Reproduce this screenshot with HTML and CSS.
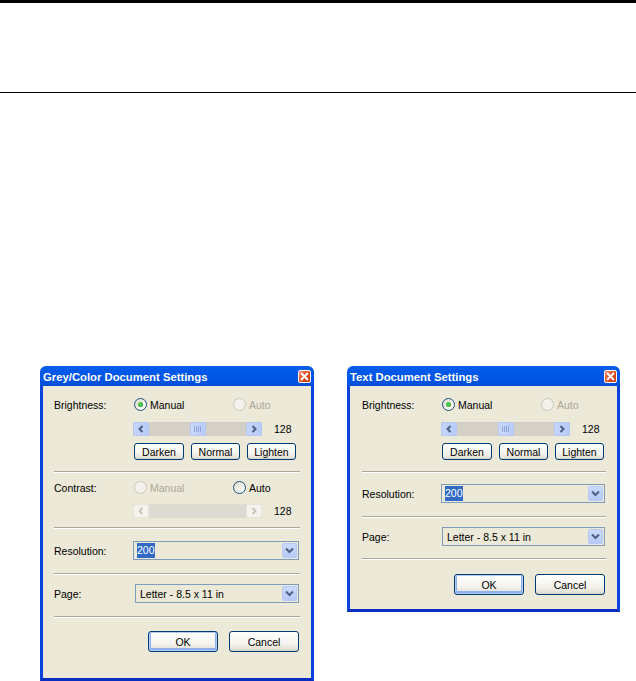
FILE: index.html
```html
<!DOCTYPE html>
<html>
<head>
<meta charset="utf-8">
<link rel="stylesheet" href="styles.css">
</head>
<body>
<div class="header"></div>
<div class="dialogs">
  <div class="dlg dlg-grey">
    <div class="titlebar">
      <span class="title">Grey/Color Document Settings</span>
      <span class="close"><svg width="9" height="9" viewBox="0 0 9 9"><path d="M1 1L8 8M8 1L1 8" stroke="#fff" stroke-width="2"/></svg></span>
    </div>
    <div class="body">
      <div class="row r-bright">
        <span class="lbl">Brightness:</span>
        <div class="radios">
          <span class="opt opt1"><span class="radio on"></span><span>Manual</span></span>
          <span class="opt dis"><span class="radio"></span><span>Auto</span></span>
        </div>
      </div>
      <div class="row r-scroll">
        <span class="lbl"></span>
        <div class="scroll">
          <span class="sarrow"><svg width="8" height="8" viewBox="0 0 8 8"><path d="M5.5 1L2.5 4L5.5 7" fill="none" stroke="#4D6185" stroke-width="2"/></svg></span>
          <span class="strack"><span class="sthumb"><svg width="8" height="6" viewBox="0 0 8 6"><path d="M0.5 0V6M2.5 0V6M4.5 0V6M6.5 0V6" stroke="#8EA6DC" stroke-width="1"/></svg></span></span>
          <span class="sarrow"><svg width="8" height="8" viewBox="0 0 8 8"><path d="M2.5 1L5.5 4L2.5 7" fill="none" stroke="#4D6185" stroke-width="2"/></svg></span>
        </div>
        <span class="val">128</span>
      </div>
      <div class="row r-btns">
        <span class="lbl"></span>
        <div class="btns">
          <span class="btn b1">Darken</span>
          <span class="btn">Normal</span>
          <span class="btn">Lighten</span>
        </div>
      </div>
      <div class="sep s1"></div>
      <div class="row r-contrast">
        <span class="lbl">Contrast:</span>
        <div class="radios">
          <span class="opt opt1 dis"><span class="radio"></span><span>Manual</span></span>
          <span class="opt"><span class="radio ring"></span><span>Auto</span></span>
        </div>
      </div>
      <div class="row r-scroll2">
        <span class="lbl"></span>
        <div class="scroll dis">
          <span class="sarrow"><svg width="8" height="8" viewBox="0 0 8 8"><path d="M5.5 1L2.5 4L5.5 7" fill="none" stroke="#C9C7BA" stroke-width="2"/></svg></span>
          <span class="strack"></span>
          <span class="sarrow"><svg width="8" height="8" viewBox="0 0 8 8"><path d="M2.5 1L5.5 4L2.5 7" fill="none" stroke="#C9C7BA" stroke-width="2"/></svg></span>
        </div>
        <span class="val">128</span>
      </div>
      <div class="sep s2"></div>
      <div class="row r-res">
        <span class="lbl">Resolution:</span>
        <div class="combo">
          <span class="ctext"><span class="sel">200</span></span>
          <span class="cbtn"><svg width="9" height="7" viewBox="0 0 9 7"><path d="M1 1.5L4.5 5L8 1.5" fill="none" stroke="#4D6185" stroke-width="2"/></svg></span>
        </div>
      </div>
      <div class="sep s3"></div>
      <div class="row r-page">
        <span class="lbl">Page:</span>
        <div class="combo combo-page">
          <span class="ctext">Letter - 8.5 x 11 in</span>
          <span class="cbtn"><svg width="9" height="7" viewBox="0 0 9 7"><path d="M1 1.5L4.5 5L8 1.5" fill="none" stroke="#4D6185" stroke-width="2"/></svg></span>
        </div>
      </div>
      <div class="sep s4"></div>
      <div class="actions a-grey">
        <span class="btn big def">OK</span>
        <span class="btn big">Cancel</span>
      </div>
    </div>
  </div>

  <div class="dlg dlg-text">
    <div class="titlebar">
      <span class="title">Text Document Settings</span>
      <span class="close"><svg width="9" height="9" viewBox="0 0 9 9"><path d="M1 1L8 8M8 1L1 8" stroke="#fff" stroke-width="2"/></svg></span>
    </div>
    <div class="body">
      <div class="row r-bright">
        <span class="lbl">Brightness:</span>
        <div class="radios">
          <span class="opt opt1"><span class="radio on"></span><span>Manual</span></span>
          <span class="opt dis"><span class="radio"></span><span>Auto</span></span>
        </div>
      </div>
      <div class="row r-scroll">
        <span class="lbl"></span>
        <div class="scroll">
          <span class="sarrow"><svg width="8" height="8" viewBox="0 0 8 8"><path d="M5.5 1L2.5 4L5.5 7" fill="none" stroke="#4D6185" stroke-width="2"/></svg></span>
          <span class="strack"><span class="sthumb"><svg width="8" height="6" viewBox="0 0 8 6"><path d="M0.5 0V6M2.5 0V6M4.5 0V6M6.5 0V6" stroke="#8EA6DC" stroke-width="1"/></svg></span></span>
          <span class="sarrow"><svg width="8" height="8" viewBox="0 0 8 8"><path d="M2.5 1L5.5 4L2.5 7" fill="none" stroke="#4D6185" stroke-width="2"/></svg></span>
        </div>
        <span class="val">128</span>
      </div>
      <div class="row r-btns">
        <span class="lbl"></span>
        <div class="btns">
          <span class="btn b1">Darken</span>
          <span class="btn">Normal</span>
          <span class="btn">Lighten</span>
        </div>
      </div>
      <div class="sep s1"></div>
      <div class="row r-res t-res">
        <span class="lbl">Resolution:</span>
        <div class="combo">
          <span class="ctext"><span class="sel">200</span></span>
          <span class="cbtn"><svg width="9" height="7" viewBox="0 0 9 7"><path d="M1 1.5L4.5 5L8 1.5" fill="none" stroke="#4D6185" stroke-width="2"/></svg></span>
        </div>
      </div>
      <div class="sep s3"></div>
      <div class="row r-page">
        <span class="lbl">Page:</span>
        <div class="combo combo-page">
          <span class="ctext">Letter - 8.5 x 11 in</span>
          <span class="cbtn"><svg width="9" height="7" viewBox="0 0 9 7"><path d="M1 1.5L4.5 5L8 1.5" fill="none" stroke="#4D6185" stroke-width="2"/></svg></span>
        </div>
      </div>
      <div class="sep t4"></div>
      <div class="actions a-text">
        <span class="btn big def">OK</span>
        <span class="btn big">Cancel</span>
      </div>
    </div>
  </div>
</div>
</body>
</html>
```
FILE: styles.css
```css
html, body {
  margin: 0;
  padding: 0;
  background: #fff;
}
body {
  font-family: "Liberation Sans", Arial, sans-serif;
  font-size: 10.5px;
  color: #000;
}
.header {
  height: 89px;
  border-top: 3px solid #000;
  border-bottom: 1px solid #000;
}
.dialogs {
  display: flex;
  align-items: flex-start;
  gap: 33px;
  padding-left: 40px;
  margin-top: 273px;
}
.dlg {
  display: flex;
  flex-direction: column;
}
.dlg-grey { width: 274px; }
.dlg-text { width: 273px; }
.titlebar {
  height: 20px;
  box-sizing: border-box;
  display: flex;
  align-items: center;
  justify-content: space-between;
  padding: 0 3px 0 3px;
  background: linear-gradient(#0A5EEC, #0058E8 30%, #0054E3 70%, #0050D8);
  border-radius: 6px 6px 0 0;
}
.title {
  color: #fff;
  font-weight: bold;
  font-size: 11.3px;
  padding-top: 1px;
}
.close {
  width: 13px;
  height: 13px;
  box-sizing: border-box;
  border: 1px solid #fff;
  border-radius: 2px;
  background: linear-gradient(135deg, #F08C6C, #DD4B21 55%, #C53A12);
  display: flex;
  align-items: center;
  justify-content: center;
  margin-top: 1px;
}
.close svg { display: block; }
.body {
  background: #ECE9D8;
  border-left: 3px solid #0843DC;
  border-right: 3px solid #0843DC;
  border-bottom: 3px solid #0A2FC0;
  padding: 0 12px 0 11px;
  display: flex;
  flex-direction: column;
}
.dlg-text .body { padding-left: 12px; }
.row {
  display: flex;
  align-items: center;
}
.lbl {
  width: 79px;
  flex: none;
}
.dlg-text .lbl { width: 79px; }
.r-bright { margin-top: 12px; height: 13px; }
.r-scroll { margin-top: 11px; height: 14px; }
.r-btns { margin-top: 7px; height: 17px; }
.r-contrast { margin-top: 8px; height: 13px; }
.r-scroll2 { margin-top: 10px; height: 14px; }
.r-res { margin-top: 12px; height: 19px; }
.t-res { margin-top: 11px; }
.r-page { margin-top: 9px; height: 19px; }

.sep {
  height: 1px;
  border-top: 1px solid #ACA899;
  background: #fff;
  margin-right: -1px;
}
.s1 { margin-top: 11px; }
.s2 { margin-top: 9px; }
.s3 { margin-top: 13px; }
.s4 { margin-top: 13px; }
.t4 { margin-top: 12px; }

.radios {
  display: flex;
  align-items: center;
}
.opt {
  display: flex;
  align-items: center;
  gap: 3px;
}
.opt1 { width: 99px; padding-left: 1px; }
.opt.dis { color: #ACA899; }
.radio {
  width: 13px;
  height: 13px;
  box-sizing: border-box;
  border-radius: 50%;
  border: 1px solid #1C5180;
  background: linear-gradient(135deg, #DCD9CA, #F4F3EE 60%, #fff);
  display: flex;
  align-items: center;
  justify-content: center;
}
.radio.on::after {
  content: "";
  width: 5px;
  height: 5px;
  border-radius: 50%;
  background: radial-gradient(circle at 40% 40%, #5BD35B, #21A121);
}
.radio.ring { border-width: 1.5px; }
.opt.dis .radio {
  border-color: #CAC8BB;
  background: #F2F1EB;
}

.scroll {
  width: 129px;
  height: 14px;
  display: flex;
  background: #D4D0C8;
}
.sarrow {
  width: 16px;
  height: 14px;
  box-sizing: border-box;
  flex: none;
  border: 1px solid #B4C8F6;
  border-radius: 2px;
  background: linear-gradient(90deg, #C5D6FC, #B8CCF8);
  display: flex;
  align-items: center;
  justify-content: center;
}
.sarrow svg { display: block; }
.strack {
  flex: 1;
  display: flex;
  justify-content: center;
}
.sthumb {
  width: 16px;
  height: 14px;
  box-sizing: border-box;
  border: 1px solid #B4C8F6;
  border-radius: 2px;
  background: linear-gradient(90deg, #CAD9FC, #BACDF8);
  display: flex;
  align-items: center;
  justify-content: center;
}
.scroll.dis { background: #DDDAD2; }
.scroll.dis .sarrow {
  border-color: #E8E6DC;
  background: #F4F3EE;
}
.val {
  margin-left: 12px;
}

.btns {
  display: flex;
  gap: 7px;
  padding-left: 1px;
}
.btn {
  box-sizing: border-box;
  height: 17px;
  width: 49px;
  border: 1px solid #003C74;
  border-radius: 3px;
  background: linear-gradient(#FFFFFF, #F4F3EE 60%, #E5E2D8 90%, #D6D0C5);
  display: flex;
  align-items: center;
  justify-content: center;
  font-size: 10.5px;
}
.b1 { width: 50px; }
.btn.big {
  width: 70px;
  height: 21px;
}
.btn.def {
  box-shadow: inset 0 0 0 1px #B6CBF5, inset 0 -1px 0 2px #8FB0EE;
}

.combo {
  flex: 1;
  height: 19px;
  box-sizing: border-box;
  border: 1px solid #7F9DB9;
  background: #ECE9D8;
  display: flex;
  align-items: center;
  padding: 1px;
}
.combo-page { margin-left: 2px; }
.dlg-text .combo-page { margin-left: 1px; }
.ctext {
  flex: 1;
  padding-left: 2px;
  display: flex;
  align-items: center;
}
.combo-page .ctext { padding-left: 3px; }
.sel {
  background: #316AC5;
  color: #fff;
  padding: 1px 0;
  line-height: 13px;
}
.cbtn {
  width: 15px;
  height: 15px;
  box-sizing: border-box;
  border: 1px solid #B6CAF5;
  border-radius: 2px;
  background: linear-gradient(#CBDAFC, #B6CAF6);
  display: flex;
  align-items: center;
  justify-content: center;
}
.cbtn svg { display: block; }

.actions {
  display: flex;
  justify-content: flex-end;
  gap: 11px;
}
.a-grey { margin-top: 13px; margin-bottom: 26px; }
.a-text { margin-top: 14px; margin-bottom: 14px; }
```
